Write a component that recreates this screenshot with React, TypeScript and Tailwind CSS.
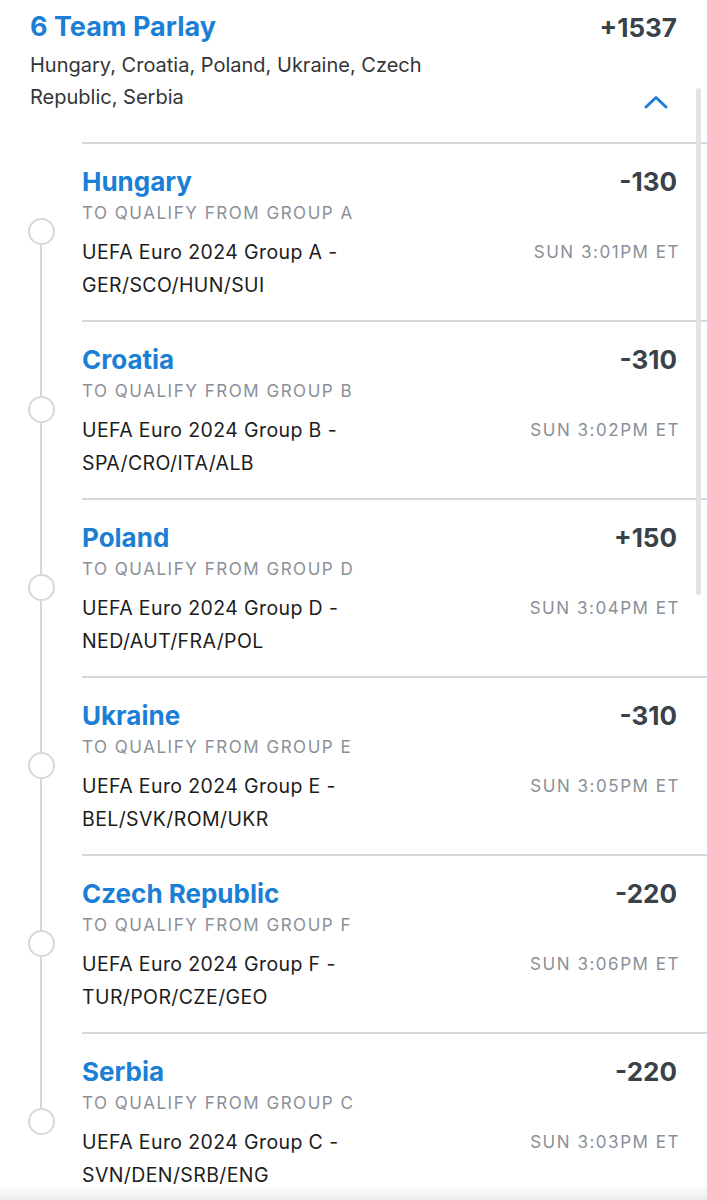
import React from 'react';

interface Leg {
  team: string;
  odds: string;
  market: string;
  event: string;
  matchup: string;
  time: string;
}

const legs: Leg[] = [
  { team: 'Hungary', odds: '-130', market: 'To Qualify From Group A', event: 'UEFA Euro 2024 Group A -', matchup: 'GER/SCO/HUN/SUI', time: 'SUN 3:01PM ET' },
  { team: 'Croatia', odds: '-310', market: 'To Qualify From Group B', event: 'UEFA Euro 2024 Group B -', matchup: 'SPA/CRO/ITA/ALB', time: 'SUN 3:02PM ET' },
  { team: 'Poland', odds: '+150', market: 'To Qualify From Group D', event: 'UEFA Euro 2024 Group D -', matchup: 'NED/AUT/FRA/POL', time: 'SUN 3:04PM ET' },
  { team: 'Ukraine', odds: '-310', market: 'To Qualify From Group E', event: 'UEFA Euro 2024 Group E -', matchup: 'BEL/SVK/ROM/UKR', time: 'SUN 3:05PM ET' },
  { team: 'Czech Republic', odds: '-220', market: 'To Qualify From Group F', event: 'UEFA Euro 2024 Group F -', matchup: 'TUR/POR/CZE/GEO', time: 'SUN 3:06PM ET' },
  { team: 'Serbia', odds: '-220', market: 'To Qualify From Group C', event: 'UEFA Euro 2024 Group C -', matchup: 'SVN/DEN/SRB/ENG', time: 'SUN 3:03PM ET' },
];

const LegRow: React.FC<{ leg: Leg; first: boolean; last: boolean }> = ({ leg, first, last }) => (
  <div className="flex">
    {/* timeline rail */}
    <div className="w-[82px] shrink-0 flex flex-col items-center">
      <div className={`flex-1 w-[2px] ${first ? 'bg-transparent' : 'bg-[#d6d9dc]'}`} />
      <div className="w-[27px] h-[27px] rounded-full border-2 border-[#d6d9dc] bg-white shrink-0" />
      <div className={`flex-1 w-[2px] ${last ? 'bg-transparent' : 'bg-[#d6d9dc]'}`} />
    </div>

    <div className="flex-1 border-t-2 border-[#d6d9dc] pt-[21px] pb-[18px] pr-[30px]">
      <div className="flex items-center justify-between h-[32px]">
        <span className="text-[26px] font-bold text-[#1b7fd6]">{leg.team}</span>
        <span className="text-[26px] font-bold text-[#3a4249]">{leg.odds}</span>
      </div>
      <div className="mt-[4px] h-[24px] leading-[24px] text-[17px] uppercase tracking-[0.09em] text-[#8a9098]">
        {leg.market}
      </div>
      <div className="mt-[11px] flex justify-between">
        <div className="text-[19.5px] leading-[33px] tracking-[0.02em] text-[#1c1c1c]">
          <div>{leg.event}</div>
          <div>{leg.matchup}</div>
        </div>
        <div className="text-[17px] leading-[33px] tracking-[0.09em] text-[#8a9098] -mr-[3px]">
          {leg.time}
        </div>
      </div>
    </div>
  </div>
);

export default function App() {
  return (
    <div
      className="relative w-[707px] h-[1200px] overflow-hidden bg-white"
      style={{ fontFamily: 'Inter, Lato, sans-serif' }}
    >
      {/* parlay header */}
      <div className="pl-[30px] pr-[30px] pt-[10px] pb-[29px]">
        <div className="flex items-center justify-between h-[34px]">
          <span className="text-[27px] font-bold text-[#1b7fd6]">6 Team Parlay</span>
          <span className="text-[26px] font-bold text-[#3a4249]">+1537</span>
        </div>
        <div className="mt-[5px] flex items-end justify-between">
          <p className="w-[440px] text-[20px] leading-[32px] text-[#333638]">
            Hungary, Croatia, Poland, Ukraine, Czech Republic, Serbia
          </p>
          <svg width="24" height="14" viewBox="0 0 24 14" className="mb-[4px] mr-[9px]">
            <polyline
              points="2,12 12,2.5 22,12"
              fill="none"
              stroke="#1b7fd6"
              strokeWidth="3"
              strokeLinecap="round"
              strokeLinejoin="round"
            />
          </svg>
        </div>
      </div>

      <div>
        {legs.map((leg, i) => (
          <LegRow key={leg.team} leg={leg} first={i === 0} last={i === legs.length - 1} />
        ))}
      </div>

      {/* overlay scrollbar */}
      <div className="absolute right-[6px] top-[88px] w-[5px] h-[507px] rounded-full bg-[#e3e3e3]" />

      {/* bottom fade */}
      <div className="absolute left-0 right-0 bottom-0 h-[16px] bg-gradient-to-b from-white to-[#ececec]" />
    </div>
  );
}
